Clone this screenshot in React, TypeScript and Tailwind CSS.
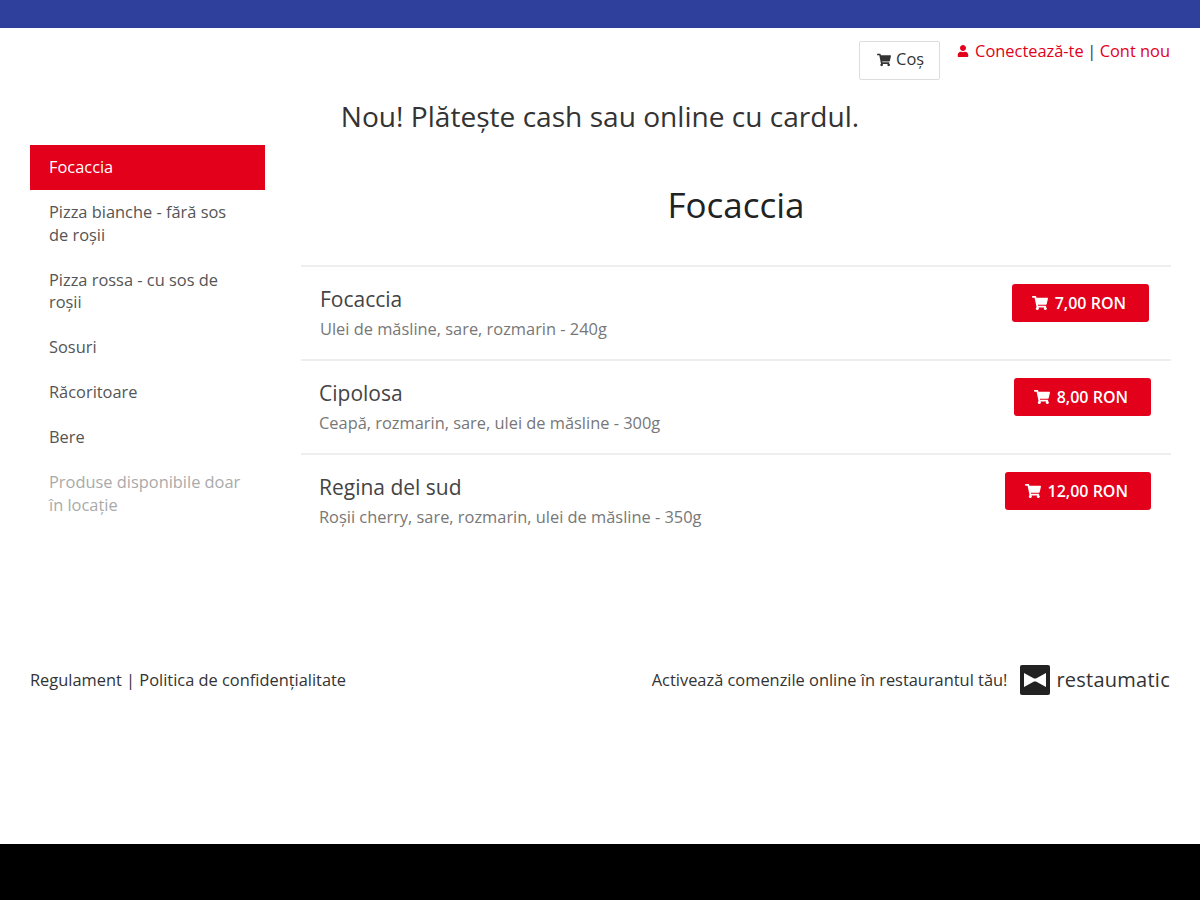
import { FaShoppingCart, FaUser } from "react-icons/fa";

const categories = [
  "Pizza bianche - fără sos de roșii",
  "Pizza rossa - cu sos de roșii",
  "Sosuri",
  "Răcoritoare",
  "Bere",
];

const products = [
  { name: "Focaccia", desc: "Ulei de măsline, sare, rozmarin - 240g", price: "7,00 RON", inset: "pl-[19px] pr-[22px]" },
  { name: "Cipolosa", desc: "Ceapă, rozmarin, sare, ulei de măsline - 300g", price: "8,00 RON", inset: "pl-[18px] pr-[20px]" },
  { name: "Regina del sud", desc: "Roșii cherry, sare, rozmarin, ulei de măsline - 350g", price: "12,00 RON", inset: "pl-[18px] pr-[20px]" },
];

function Logo() {
  return (
    <div className="flex items-center gap-[6px]">
      <div className="flex h-[30px] w-[30px] items-center justify-center rounded-[2px] bg-[#222222]">
        <svg width="24" height="14" viewBox="0 0 24 14" fill="#fff">
          <path d="M1 0 L11 5.5 L13 5.5 L23 0 L23 14 L13 8.5 L11 8.5 L1 14 Z" />
        </svg>
      </div>
      <span className="text-[20px] leading-none tracking-[0.25px] text-[#333]">restaumatic</span>
    </div>
  );
}

export default function App() {
  return (
    <div className="flex h-[900px] flex-col bg-white font-['Open_Sans',sans-serif] text-[#333]">
      <div className="h-7 bg-[#2e3f9c]" />

      <div className="flex items-start justify-end gap-[17px] pr-[30px] pt-[13px]">
        <button className="flex h-[39px] w-[81px] items-center justify-center gap-[5px] rounded-[2px] border border-[#dddddd] pb-[2px] pl-[2px] text-[16.4px] text-[#333]">
          <FaShoppingCart className="text-[14px]" />
          Coș
        </button>
        <div className="-mt-[1px] flex items-center text-[16.4px] leading-[22px] text-[#e2001a]">
          <FaUser className="mr-[6px] text-[12px]" />
          <span>Conectează-te</span>
          <span className="mx-[3.5px] text-[#333]">|</span>
          <span>Cont nou</span>
        </div>
      </div>

      <div className="mt-[17px] text-center text-[28.1px] leading-[38px]">Nou! Plătește cash sau online cu cardul.</div>

      <div className="mt-[10px] flex pl-[30px] pr-[29px]">
        <nav className="w-[235px] shrink-0 text-[16.4px] leading-[22.5px]">
          <div className="bg-[#e2001a] px-[19px] py-[11.25px] text-white">Focaccia</div>
          {categories.map((c) => (
            <div key={c} className="px-[19px] py-[11.25px] text-[#555]">{c}</div>
          ))}
          <div className="px-[19px] py-[11.25px] text-[#aaaaaa]">Produse disponibile doar în locație</div>
        </nav>

        <main className="ml-[36px] flex-1">
          <h1 className="mt-[38px] mb-[38px] text-center text-[35px] leading-[44px] text-[#222]">Focaccia</h1>
          {products.map((p) => (
            <div key={p.name} className={`flex h-[94px] items-start justify-between border-t-2 border-[#eeeeee] pt-[14px] ${p.inset}`}>
              <div>
                <div className="text-[21px] leading-[37px] text-[#444]">{p.name}</div>
                <div className="text-[16.4px] leading-[22px] text-[#777]">{p.desc}</div>
              </div>
              <button className="mt-[3px] flex h-[38px] items-center gap-[7px] rounded-[3px] bg-[#e2001a] pb-[1px] pl-[20px] pr-[23px] text-[16px] font-semibold text-white">
                <FaShoppingCart className="text-[16px]" />
                {p.price}
              </button>
            </div>
          ))}
        </main>
      </div>

      <div className="mt-[118px] flex items-center justify-between px-[30px]">
        <div className="pt-[1px] text-[16.4px]">Regulament | Politica de confidențialitate</div>
        <div className="flex items-center gap-[13px]">
          <span className="text-[16.4px]">Activează comenzile online în restaurantul tău!</span>
          <Logo />
        </div>
      </div>

      <div className="flex-1" />
      <div className="h-14 bg-black" />
    </div>
  );
}
